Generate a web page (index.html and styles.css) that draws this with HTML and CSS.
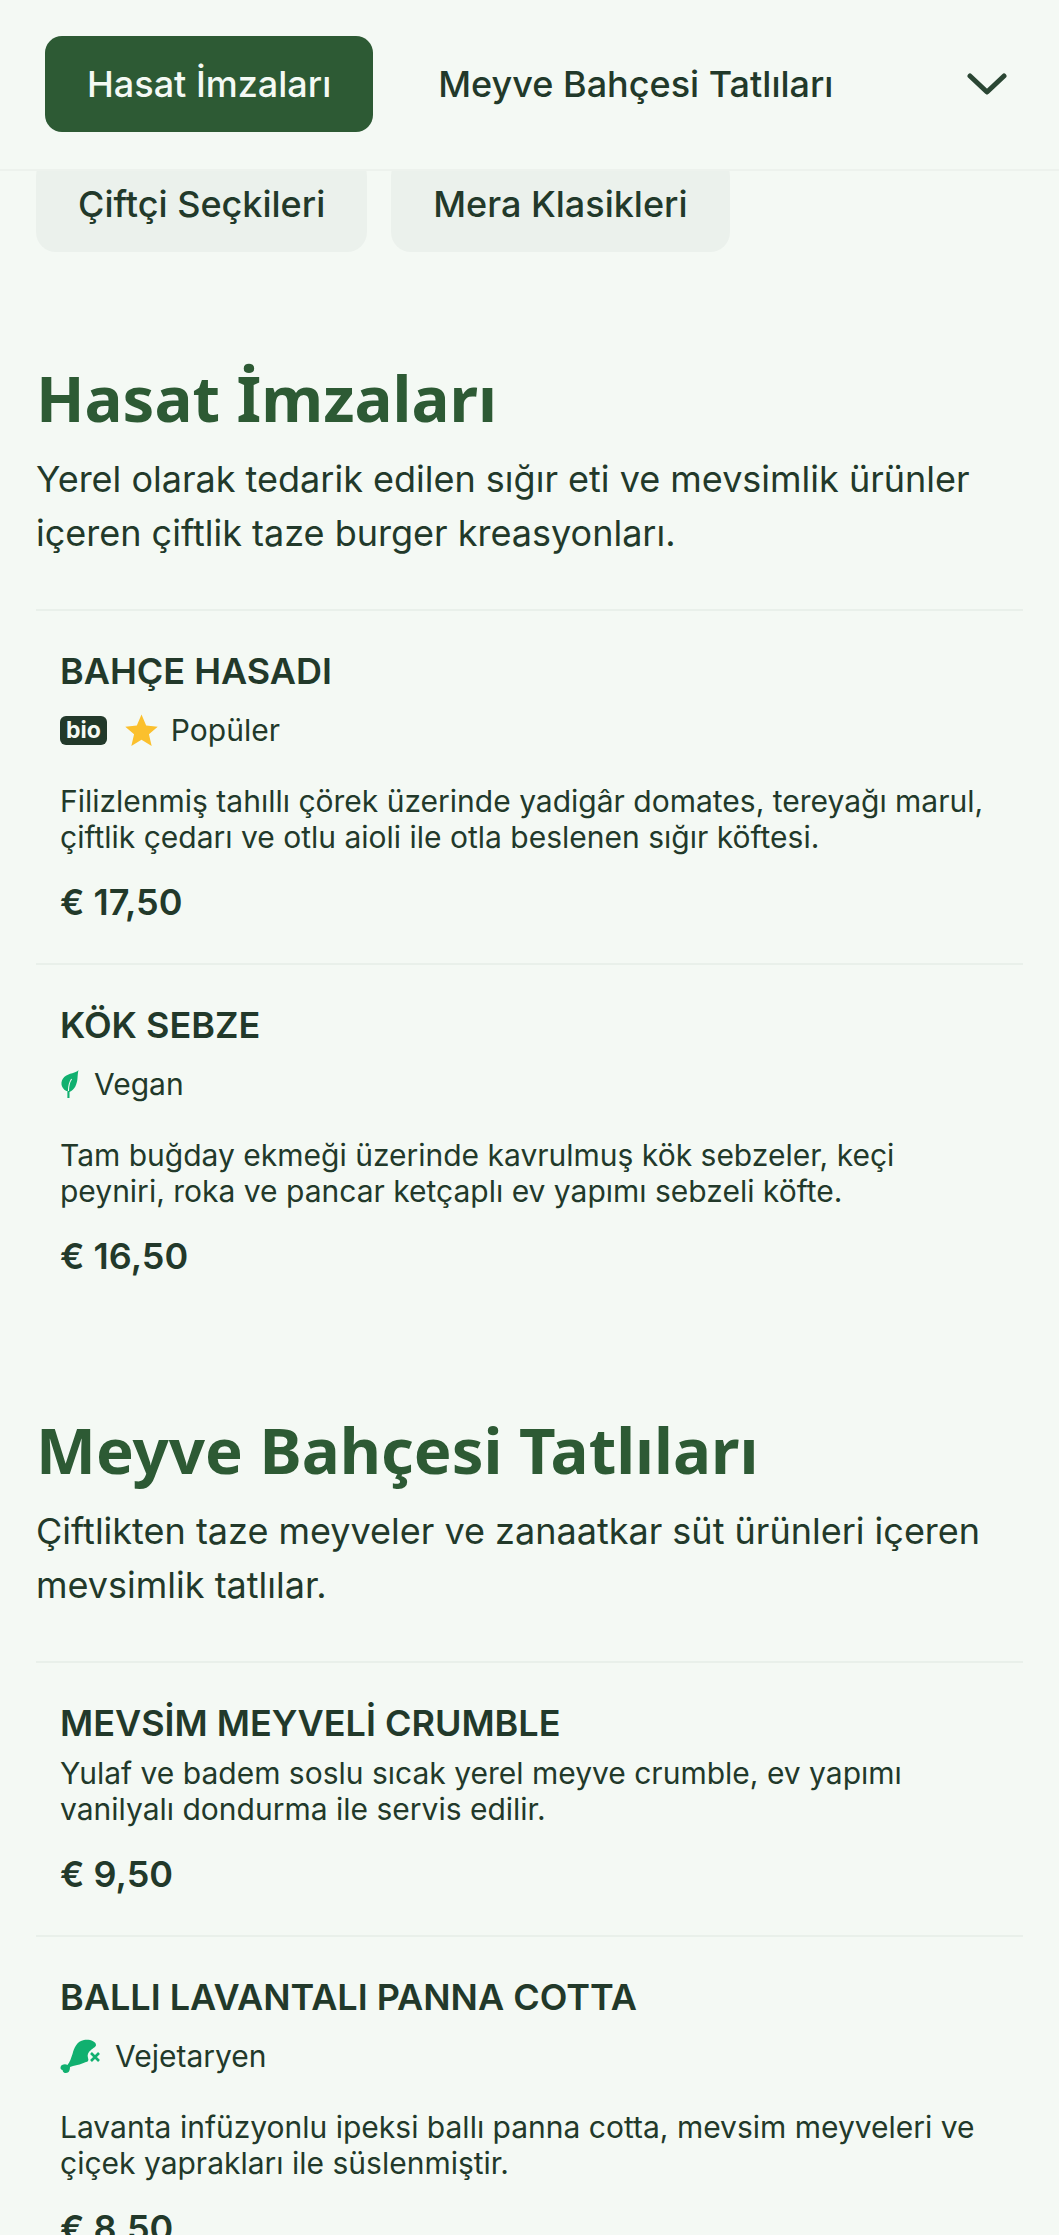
FILE: index.html
```html
<!DOCTYPE html>
<html lang="tr">
<head>
<meta charset="utf-8">
<title>Menü</title>
<link rel="stylesheet" href="styles.css">
</head>
<body>
<header class="topbar">
  <nav class="tabs">
    <a class="tab tab-active">Hasat İmzaları</a>
    <a class="tab">Meyve Bahçesi Tatlıları</a>
  </nav>
  <button class="toggle" aria-label="Daha fazla">
    <svg width="40" height="22" viewBox="0 0 40 22" fill="none" stroke="#2a4633" stroke-width="5" stroke-linecap="round" stroke-linejoin="round"><path d="M3 3 L20 19 L37 3"/></svg>
  </button>
</header>
<div class="chips">
  <a class="chip">Çiftçi Seçkileri</a>
  <a class="chip">Mera Klasikleri</a>
</div>
<main>
  <section class="section section-first">
    <h2 class="section-title">Hasat İmzaları</h2>
    <p class="section-desc">Yerel olarak tedarik edilen sığır eti ve mevsimlik ürünler içeren çiftlik taze burger kreasyonları.</p>
    <article class="item">
      <h3 class="item-title">BAHÇE HASADI</h3>
      <div class="tags">
        <span class="bio">bio</span>
        <span class="tag tag-popular">
          <svg class="icon-star" viewBox="0 0 24 24"><path fill="#fbc02d" d="M12 .4l3.400 8 8.400.8-6.400 5.600 2 8.500-7.400-4.500-7.400 4.500 2-8.500L.2 9.200l8.400-.8z"/></svg>
          Popüler
        </span>
      </div>
      <p class="item-desc">Filizlenmiş tahıllı çörek üzerinde yadigâr domates, tereyağı marul, çiftlik çedarı ve otlu aioli ile otla beslenen sığır köftesi.</p>
      <div class="price">€ 17,50</div>
    </article>
    <article class="item">
      <h3 class="item-title">KÖK SEBZE</h3>
      <div class="tags">
        <span class="tag">
          <svg class="icon-leaf" viewBox="0 0 18 28" preserveAspectRatio="none"><path fill="#10b06f" d="M17.500 0C16 3 8 3 4 7 0 11 .5 18 6 21h1v7h2v-6c5-2 7-8 7.500-13 .3-4 .5-7 1-9z"/><path fill="none" stroke="#f4f9f4" stroke-width="1" d="M8 21c0-5 1-9 3-12"/></svg>
          Vegan
        </span>
      </div>
      <p class="item-desc">Tam buğday ekmeği üzerinde kavrulmuş kök sebzeler, keçi peyniri, roka ve pancar ketçaplı ev yapımı sebzeli köfte.</p>
      <div class="price">€ 16,50</div>
    </article>
  </section>
  <section class="section">
    <h2 class="section-title">Meyve Bahçesi Tatlıları</h2>
    <p class="section-desc">Çiftlikten taze meyveler ve zanaatkar süt ürünleri içeren mevsimlik tatlılar.</p>
    <article class="item">
      <h3 class="item-title">MEVSİM MEYVELİ CRUMBLE</h3>
      <p class="item-desc item-desc-tight">Yulaf ve badem soslu sıcak yerel meyve crumble, ev yapımı vanilyalı dondurma ile servis edilir.</p>
      <div class="price">€ 9,50</div>
    </article>
    <article class="item">
      <h3 class="item-title">BALLI LAVANTALI PANNA COTTA</h3>
      <div class="tags">
        <span class="tag">
          <svg class="icon-veg" viewBox="0 0 40 36"><path fill="#10b06f" d="M24 2c5-1 12 1 12 5 0 2-3 3-5 5-3 2-4 5-3 8 1 2 0 4-2 4-4 2-9 3-13 4l-3 1c0 3-1 6-4 6s-3-2-3.500-3C0 32 0 28 2 27c2-1 4-1 5.500 0 2.500-3 3.500-7 5-11C14 10 17 3 24 2z"/><path fill="none" stroke="#10b06f" stroke-width="2.600" d="M31 15l8 8M39 15l-8 8"/></svg>
          Vejetaryen
        </span>
      </div>
      <p class="item-desc">Lavanta infüzyonlu ipeksi ballı panna cotta, mevsim meyveleri ve çiçek yaprakları ile süslenmiştir.</p>
      <div class="price">€ 8,50</div>
    </article>
  </section>
</main>
</body>
</html>
```
FILE: styles.css
```css
* { box-sizing: border-box; }
html, body { margin: 0; padding: 0; }
html { height: 2235px; overflow: hidden; }
body {
  width: 1059px;
  height: 2235px;
  overflow: hidden;
  background: #f4f9f4;
  color: #22392a;
  font-family: Inter, "Liberation Sans", sans-serif;
}
.topbar {
  position: relative;
  z-index: 1;
  height: 171px;
  display: flex;
  align-items: center;
  justify-content: space-between;
  padding: 0 52px 2px 45px;
  background: #f4f9f4;
  border-bottom: 2px solid #edf2ed;
}
.tabs { display: flex; gap: 23px; }
.tab {
  height: 96px;
  padding: 0 42px;
  display: flex;
  align-items: center;
  font-size: 36px;
  font-weight: 500;
  border-radius: 17px;
}
.tab-active { background: #2d5a34; color: #f4f9f4; }
.toggle { border: 0; background: none; padding: 0; display: flex; }
.chips {
  display: flex;
  gap: 24px;
  margin-top: -15px;
  padding: 0 36px;
}
.chip {
  height: 96px;
  padding: 0 42px;
  display: flex;
  align-items: center;
  font-size: 36px;
  font-weight: 500;
  background: #ebf1ec;
  border-radius: 20px;
}
main { padding: 0 36px; }
.section-first { padding-top: 112px; }
.section { padding-bottom: 99px; }
.section-title {
  margin: 0;
  font-family: "Noto Sans", sans-serif;
  font-size: 63.5px;
  line-height: 67px;
  font-weight: 700;
  color: #2d5a34;
}
.section-desc {
  margin: 21px 0 0;
  font-size: 36px;
  line-height: 54px;
  color: #22392a;
  padding-bottom: 49px;
}
.item {
  border-top: 2px solid #e9f0ea;
  padding: 38px 24px 39px;
}
.item-title {
  margin: 0;
  font-size: 36px;
  line-height: 44px;
  font-weight: 600;
}
.tags {
  display: flex;
  align-items: center;
  gap: 18px;
  margin-top: 16px;
  height: 42px;
}
.tag {
  display: flex;
  align-items: center;
  gap: 15px;
  font-size: 30px;
}
.tag-popular { gap: 13px; }
.bio {
  background: #22392a;
  color: #f4f9f4;
  font-size: 23px;
  font-weight: 700;
  line-height: 29px;
  padding: 0 6px;
  border-radius: 6px;
}
.icon-star { width: 33px; height: 33px; }
.icon-leaf { width: 19px; height: 28px; }
.icon-veg { width: 40px; height: 36px; }
.item-desc {
  margin: 32px 0 0;
  font-size: 30px;
  line-height: 36px;
}
.item-desc-tight { margin-top: 10px; }
.price {
  margin-top: 25px;
  font-size: 36px;
  line-height: 44px;
  font-weight: 600;
}
```
